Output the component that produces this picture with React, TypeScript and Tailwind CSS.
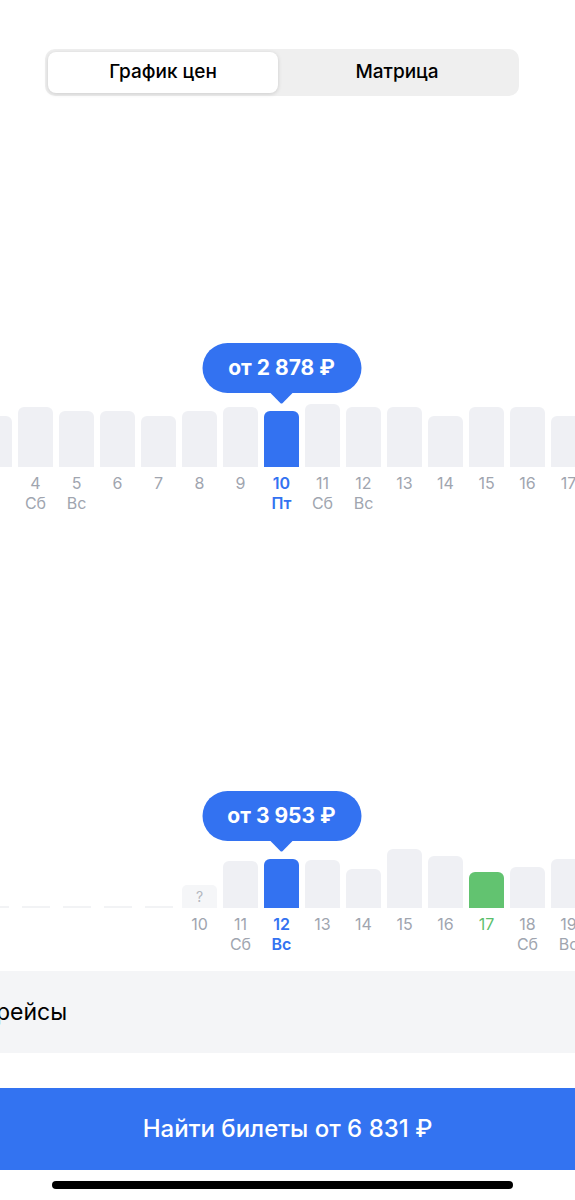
import React from "react";

type Col = {
  day: number;
  h: number; // 0 = empty, -1 = unknown
  wd?: string;
  sel?: boolean;
  green?: boolean;
  price?: string;
};

const chart1: Col[] = [
  { day: 3, h: 51 },
  { day: 4, h: 60, wd: "Сб" },
  { day: 5, h: 56, wd: "Вс" },
  { day: 6, h: 56 },
  { day: 7, h: 51 },
  { day: 8, h: 56 },
  { day: 9, h: 60 },
  { day: 10, h: 56, wd: "Пт", sel: true, price: "от 2 878 ₽" },
  { day: 11, h: 63, wd: "Сб" },
  { day: 12, h: 60, wd: "Вс" },
  { day: 13, h: 60 },
  { day: 14, h: 51 },
  { day: 15, h: 60 },
  { day: 16, h: 60 },
  { day: 17, h: 51 },
];

const chart2: Col[] = [
  { day: 5, h: 0 },
  { day: 6, h: 0 },
  { day: 7, h: 0 },
  { day: 8, h: 0 },
  { day: 9, h: 0 },
  { day: 10, h: -1 },
  { day: 11, h: 47, wd: "Сб" },
  { day: 12, h: 49, wd: "Вс", sel: true, price: "от 3 953 ₽" },
  { day: 13, h: 48 },
  { day: 14, h: 39 },
  { day: 15, h: 59 },
  { day: 16, h: 52 },
  { day: 17, h: 36, green: true },
  { day: 18, h: 41, wd: "Сб" },
  { day: 19, h: 49, wd: "Вс" },
];

const font = { fontFamily: "Inter, 'Noto Sans', sans-serif" };

function Tooltip({ price }: { price: string }) {
  return (
    <div className="absolute bottom-[calc(100%+7px)] left-1/2 -translate-x-1/2 flex flex-col items-center z-10">
      <div className="w-[159px] h-[50px] rounded-full bg-[#3372f1] flex items-center justify-center text-white text-[21px] font-bold whitespace-nowrap">
        {price}
      </div>
      <svg width="24" height="12" viewBox="0 0 24 12" className="-mt-[1px] block">
        <path d="M0 0 L24 0 L13.2 11 Q12 12.2 10.8 11 Z" fill="#3372f1" />
      </svg>
    </div>
  );
}

function Bar({ c }: { c: Col }) {
  if (c.h === 0) {
    return (
      <div className="w-[35px] h-full flex items-end justify-center">
        <div className="w-[28px] h-[2px] bg-[#f2f3f5]" />
      </div>
    );
  }
  if (c.h === -1) {
    return (
      <div className="w-[35px] h-full flex items-end">
        <div className="w-[35px] h-[23px] rounded-t-[5px] bg-[#f5f6f8] flex items-center justify-center text-[14px] text-[#b3b7be]">
          ?
        </div>
      </div>
    );
  }
  const color = c.sel ? "bg-[#3372f1]" : c.green ? "bg-[#62c370]" : "bg-[#eff0f4]";
  return (
    <div className="w-[35px] h-full flex items-end">
      <div className={`relative w-[35px] rounded-t-[6px] ${color}`} style={{ height: c.h }}>
        {c.price && <Tooltip price={c.price} />}
      </div>
    </div>
  );
}

function Chart({ cols, barH }: { cols: Col[]; barH: number }) {
  return (
    <div className="w-full overflow-hidden pt-[80px]">
      <div className="flex gap-[6px] ml-[-23px]">
        {cols.map((c) => {
          const labelColor = c.sel
            ? "text-[#3372f1] font-semibold"
            : c.green
            ? "text-[#5cbf6c]"
            : "text-[#a0a5af]";
          return (
            <div key={c.day} className="flex flex-col items-center w-[35px] shrink-0">
              <div className="w-[35px]" style={{ height: barH }}>
                <Bar c={c} />
              </div>
              <div className={`mt-[6px] flex flex-col items-center text-[16px] leading-[20px] ${labelColor}`}>
                <span className="h-[20px]">{c.h === 0 ? "" : c.day}</span>
                <span className="h-[20px]">{c.wd ?? ""}</span>
              </div>
            </div>
          );
        })}
      </div>
    </div>
  );
}

export default function App() {
  return (
    <div className="w-[575px] h-[1200px] bg-white overflow-hidden flex flex-col" style={font}>
      <div className="mt-[49px] ml-[45px] w-[474px] h-[47px] rounded-[10px] bg-[#efefef] p-[3px] flex">
        <div className="w-[230px] h-full rounded-[8px] bg-white shadow-[0_1px_4px_rgba(0,0,0,0.15)] flex items-center justify-center text-[19px] font-medium text-black">
          График цен
        </div>
        <div className="flex-1 flex items-center justify-center text-[19px] font-medium text-black">
          Матрица
        </div>
      </div>

      <div className="mt-[228px]">
        <Chart cols={chart1} barH={63} />
      </div>

      <div className="mt-[256px]">
        <Chart cols={chart2} barH={59} />
      </div>

      <div className="mt-[17px] h-[82px] bg-[#f4f5f7] flex items-center overflow-hidden">
        <span className="ml-[-4px] text-[23px] text-black">рейсы</span>
      </div>

      <div className="mt-[35px] h-[82px] bg-[#3373f1] flex items-center justify-center text-white text-[24px] font-medium">
        Найти билеты от 6 831 ₽
      </div>

      <div className="mt-[11px] ml-[52px] w-[461px] h-[8px] rounded-full bg-black" />
    </div>
  );
}
